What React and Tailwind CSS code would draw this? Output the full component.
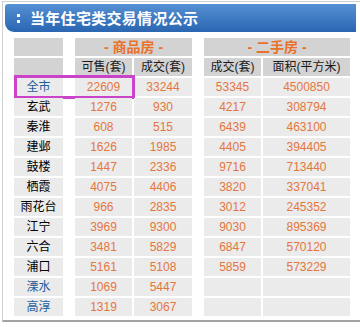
import React from "react";

const rows = [
  ["全市", "22609", "33244", "53345", "4500850", true],
  ["玄武", "1276", "930", "4217", "308794"],
  ["秦淮", "608", "515", "6439", "463100"],
  ["建邺", "1626", "1985", "4405", "394405"],
  ["鼓楼", "1447", "2336", "9716", "713440"],
  ["栖霞", "4075", "4406", "3820", "337041"],
  ["雨花台", "966", "2835", "3012", "245352"],
  ["江宁", "3969", "9300", "9030", "895369"],
  ["六合", "3481", "5829", "6847", "570120"],
  ["浦口", "5161", "5108", "5859", "573229"],
  ["溧水", "1069", "5447", "", "", true],
  ["高淳", "1319", "3067", "", "", true],
];

const font = { fontFamily: '"Liberation Sans", "Noto Sans CJK SC", sans-serif' };

export default function App() {
  return (
    <div className="w-[360px] h-[327px] bg-white" style={font}>
      <div className="ml-[2px] mt-[1px] w-[358px] h-[321px] border-t border-l border-[#cfcfcf] border-b-2 border-b-[#a3a3a3] pl-[2px] pr-[1px] pt-[2px]">
        <div className="h-[28px] w-[351px] rounded-tl-[3px] rounded-bl-[9px] bg-gradient-to-b from-[#5590d4] to-[#2a66b1] flex items-center">
          <div className="ml-[12px] mr-[10px] flex flex-col gap-[3px]">
            <div className="w-[3px] h-[3px] bg-white" />
            <div className="w-[3px] h-[3px] bg-white" />
          </div>
          <span className="text-white text-[15px] font-bold leading-none tracking-[0.3px]">当年住宅类交易情况公示</span>
        </div>
        <div className="mt-[6px] ml-[9px] flex flex-col gap-[2px] text-[12px] leading-[18px]">
          <div className="flex h-[18px]">
            <div className="w-[49px] bg-[#d3d3d3]" />
            <div className="ml-[12px] w-[117px] bg-[#d3d3d3] text-center text-[#e8722c] font-bold text-[14px]">- 商品房 -</div>
            <div className="ml-[12px] w-[146px] bg-[#d3d3d3] text-center text-[#e8722c] font-bold text-[14px]">- 二手房 -</div>
          </div>
          <div className="flex h-[18px] text-[#1a1a1a]">
            <div className="w-[49px] bg-[#d3d3d3]" />
            <div className="ml-[12px] w-[57px] bg-[#d3d3d3] text-center">可售(套)</div>
            <div className="ml-[2px] w-[58px] bg-[#d3d3d3] text-center">成交(套)</div>
            <div className="ml-[12px] w-[57px] bg-[#d3d3d3] text-center">成交(套)</div>
            <div className="ml-[2px] w-[87px] bg-[#d3d3d3] text-center">面积(平方米)</div>
          </div>
          {rows.map((r, i) => (
            <div key={i} className="relative flex h-[18px]">
              <div className={"w-[49px] bg-[#ebebeb] text-center " + (r[5] ? "text-[#1d5e9e]" : "text-black")}>{r[0]}</div>
              <div className="ml-[12px] w-[57px] bg-[#ebebeb] text-center text-[#e4763e]">{r[1]}</div>
              <div className="ml-[2px] w-[58px] bg-[#ebebeb] text-center text-[#e4763e]">{r[2]}</div>
              <div className="ml-[12px] w-[57px] bg-[#ebebeb] text-center text-[#e4763e]">{r[3]}</div>
              <div className="ml-[2px] w-[87px] bg-[#ebebeb] text-center text-[#e4763e]">{r[4]}</div>
              {i === 0 && (
                <div className="absolute left-0 top-[-3px] w-[121px] h-[24px] border-[3px] border-[#c944c9]" />
              )}
            </div>
          ))}
        </div>
      </div>
    </div>
  );
}
